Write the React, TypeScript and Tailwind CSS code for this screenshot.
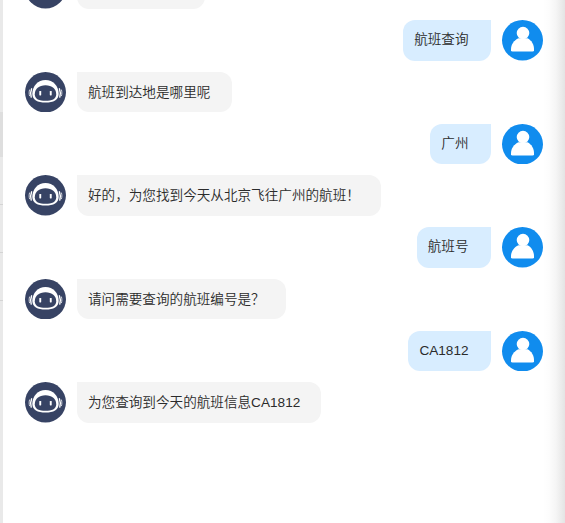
type Message = { from: 'bot' | 'user'; text: string };

const messages: Message[] = [
  { from: 'user', text: '航班查询' },
  { from: 'bot', text: '航班到达地是哪里呢' },
  { from: 'user', text: '广州' },
  { from: 'bot', text: '好的，为您找到今天从北京飞往广州的航班！' },
  { from: 'user', text: '航班号' },
  { from: 'bot', text: '请问需要查询的航班编号是？' },
  { from: 'user', text: 'CA1812' },
  { from: 'bot', text: '为您查询到今天的航班信息CA1812' },
];

function BotAvatar() {
  return (
    <svg viewBox="0 0 41 41" className="h-[40.5px] w-[41px] shrink-0" preserveAspectRatio="none">
      <circle cx="20.5" cy="20.5" r="20.5" fill="#374364" />
      <path
        d="M20.5 8.2C28 8.2 33.7 14.5 33.7 22C33.7 28 28.5 31 20.5 31S7.3 28 7.3 22C7.3 14.5 13 8.2 20.5 8.2Z"
        fill="#fff"
      />
      <path
        d="M20.5 13.4C27 13.4 31.2 17.2 31.2 22.4C31.2 27.2 26.8 29.2 20.5 29.2S9.8 27.2 9.8 22.4C9.8 17.2 14 13.4 20.5 13.4Z"
        fill="#374364"
      />
      <rect x="14.3" y="19.2" width="1.9" height="4.5" rx=".6" fill="#fff" />
      <rect x="24.8" y="19.2" width="1.9" height="4.5" rx=".6" fill="#fff" />
      <path
        d="M6.6 17C5.6 19.5 5.5 23 6.2 25.4M34.4 17C35.4 19.5 35.5 23 34.8 25.4"
        fill="none"
        stroke="#fff"
        strokeWidth="1.4"
        strokeLinecap="round"
      />
      <path
        d="M4.5 18.2C4 20 4 22.2 4.5 24M36.5 18.2C37 20 37 22.2 36.5 24"
        fill="none"
        stroke="#fff"
        strokeWidth=".8"
        strokeLinecap="round"
      />
    </svg>
  );
}

function UserAvatar() {
  return (
    <svg viewBox="0 0 41 41" className="h-[40.5px] w-[41px] shrink-0" preserveAspectRatio="none">
      <circle cx="20.5" cy="20.5" r="20.5" fill="#108cee" />
      <circle cx="21" cy="13.2" r="6.3" fill="#fff" />
      <path
        d="M16.5 18.4H25.5C29.5 20.4 32 24.7 32 29.5V30.5Q32 32 30.5 32H10.5Q9 32 9 30.5V29.5C9 24.7 12 20.4 16.5 18.4Z"
        fill="#fff"
      />
    </svg>
  );
}

function Row({ from, text }: Message) {
  if (from === 'bot') {
    return (
      <div className="flex h-[40.5px] shrink-0 gap-[11px]">
        <BotAvatar />
        <div className="h-full whitespace-nowrap rounded-[12px] rounded-tl-none bg-[#f4f4f4] pl-[11px] pr-[21.2px] leading-[41px]">
          {text}
        </div>
      </div>
    );
  }
  return (
    <div className="flex h-[40.5px] shrink-0 justify-end gap-[11px]">
      <div className="h-full whitespace-nowrap rounded-[12px] rounded-tr-none bg-[#d8edff] pl-[11px] pr-[22.5px] leading-[40.6px]">
        {text}
      </div>
      <UserAvatar />
    </div>
  );
}

export default function App() {
  return (
    <div className="flex h-[523px] w-[565px] overflow-hidden bg-white font-['Liberation_Sans','Noto_Sans_CJK_SC',sans-serif] text-[13.6px] font-[350] text-[#2b2b2b]">
      <div className="flex w-[3px] shrink-0 flex-col bg-[#e9e9e9]">
        <div className="mt-[112px] h-[45px] bg-[#dedede]" />
        <div className="mt-[47px] h-px bg-[#d4d4d4]" />
        <div className="mt-[47px] h-px bg-[#d4d4d4]" />
        <div className="mt-[47px] h-px bg-[#d4d4d4]" />
      </div>
      <main className="-mt-[31.55px] flex w-[540px] shrink-0 flex-col gap-[11.25px] pl-[22px]">
        <div className="flex h-[40.5px] shrink-0 gap-[11px]">
          <BotAvatar />
          <div className="h-full w-[128px] rounded-[12px] rounded-tl-none bg-[#f4f4f4]" />
        </div>
        {messages.map((m) => (
          <Row key={m.text} {...m} />
        ))}
      </main>
      <div className="w-[22px] shrink-0 bg-[linear-gradient(to_right,#fff_0%,#fcfcfc_30%,#f5f5f5_60%,#e4e4e4_100%)]" />
    </div>
  );
}
